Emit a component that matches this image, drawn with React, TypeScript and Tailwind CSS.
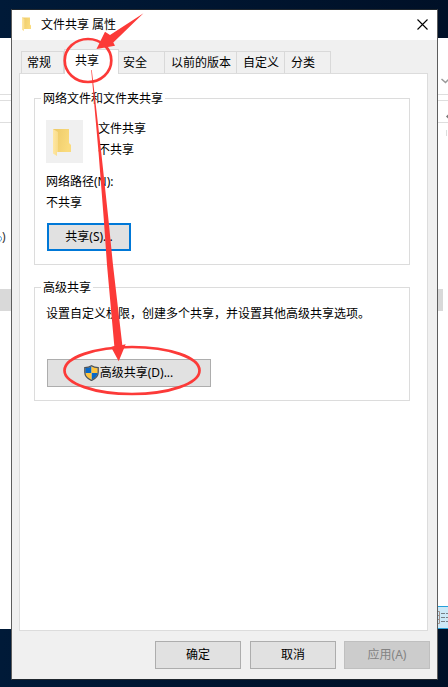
import React from "react";

function Folder({ className }: { className: string }) {
  return (
    <svg className={className} viewBox="0 0 20 28" aria-hidden="true">
      <defs>
        <linearGradient id="back" x1="0" x2="1" y1="0" y2="0.3">
          <stop offset="0" stopColor="#ecc967" />
          <stop offset="1" stopColor="#fadb7d" />
        </linearGradient>
        <linearGradient id="front" x1="0" x2="1">
          <stop offset="0" stopColor="#ffe7a3" />
          <stop offset="1" stopColor="#f8dc8b" />
        </linearGradient>
      </defs>
      <path d="M1 1h16v14l2 2v7H1z" fill="url(#back)" />
      <path d="M1 1l5 3v20l-1 0v4l-4-2.5z" fill="url(#front)" />
    </svg>
  );
}

function Shield() {
  return (
    <svg className="-mt-px h-4 w-[15px] shrink-0" viewBox="0 0 15 16" aria-hidden="true">
      <defs>
        <clipPath id="shield">
          <path d="M7.5 1.3C5.8 2.4 4 3 1.3 3v4.3c0 3.5 2.6 6 6.2 7.7 3.6-1.7 6.2-4.2 6.2-7.7V3C11 3 9.2 2.4 7.5 1.3z" />
        </clipPath>
      </defs>
      <g clipPath="url(#shield)">
        <path d="M0 0h7.500v8H0zM7.500 8H15v8H7.500z" fill="#0868c8" />
        <path d="M7.500 0H15v8H7.500zM0 8h7.500v8H0z" fill="#ffc43d" />
      </g>
      <path d="M7.5 .8C5.8 2 4 2.7 .8 2.700v4.600c0 3.800 2.900 6.500 6.700 8.200 3.800-1.700 6.700-4.400 6.700-8.200V2.700C11 2.700 9.200 2 7.500 .8z" fill="none" stroke="#4d5358" strokeWidth="1.3" />
    </svg>
  );
}

function Tab({ label, className }: { label: string; className: string }) {
  return (
    <div className={`h-[22px] border-t border-r border-[#d9d9d9] pt-[2px] ${className}`}>{label}</div>
  );
}

function Group({ title, className, children }: { title: string; className: string; children: React.ReactNode }) {
  return (
    <section className={`w-[376px] border border-[#dcdcdc] ${className}`}>
      <h2 className="-mt-[9px] ml-[6px] w-fit bg-white px-[2px]">{title}</h2>
      {children}
    </section>
  );
}

function Desktop() {
  return (
    <div className="absolute inset-0 bg-gradient-to-r from-[#001a38] to-[#001027]">
      <div className="mt-[38px] h-[591px] bg-white pt-[56px]">
        <div className="h-[7px] border-y border-[#dedede]" />
        <div className="h-[22px] border-b border-[#dedede]" />
        <div className="mt-[105px] flex h-[18px] items-center">
          <svg className="h-[9px] w-[2px]" viewBox="0 0 2 9" fill="none"><path d="M0 3.500q1.500 .3 1.500 2.200T0 8.300" stroke="#4a98d8" /></svg>
          <span className="text-[#333]">)</span>
        </div>
        <div className="mt-[43px] h-[22px] w-[443px] bg-[#d9d9d9]" />
      </div>
      <svg className="absolute top-[76px] left-[438px] h-[60px] w-[10px]" viewBox="0 0 10 60" fill="none">
        <path d="M3.500 3l4 3.500L11 3" stroke="#999" strokeWidth="1.500" />
        <path d="M8 40.500l2-2v4z" fill="#777" />
        <path d="M8.500 54v6" stroke="#ddd" />
      </svg>
      <div className="absolute top-[606px] left-[437px] h-[23px] w-[11px] border-y border-[#26a0da] bg-[#cce8f7]">
        <svg className="h-[21px] w-[11px]" viewBox="0 0 11 21" fill="none">
          <path d="M1 4.500h1.500v12H1M1 8.500h2M1 12.500h2" stroke="#a08f89" />
          <path d="M4 6.500h4M9 6.500h2M4 10.500h4M9 10.500h2M4 14.500h4M9 14.500h2" stroke="#777f86" />
        </svg>
      </div>
    </div>
  );
}

function Annotations() {
  return (
    <svg className="pointer-events-none absolute inset-0 z-20 h-[687px] w-[448px]" viewBox="0 0 448 687" fill="none">
      <ellipse cx="88" cy="60.500" rx="23.300" ry="21.500" stroke="#fc3a38" strokeWidth="2.700" />
      <path d="M143.500 13.300L113.300 42.500l1.700 3.200L96.500 49 105 31.700l5 3.300z" fill="#fc3a38" />
      <path d="M91.200 70h.6L101.200 152L108.300 218L113 265L122.300 345L125.700 344.300L118.700 361.300L111 347L114.300 346L107 265L103.700 218L98.500 152z" fill="#fc3a38" />
      <ellipse cx="132" cy="370.500" rx="67.500" ry="23.500" stroke="#fc3a38" strokeWidth="2.700" />
    </svg>
  );
}

export default function App() {
  return (
    <div className="relative h-[687px] w-[448px] overflow-hidden font-['Noto_Sans','Noto_Sans_CJK_SC',sans-serif] text-[12px] leading-[18px] whitespace-nowrap text-black">
      <Desktop />
      <main className="absolute top-[9px] left-[11px] h-[671px] w-[427px] border border-[#5d5d5d] border-t-[#20272e] border-b-[#20272e] bg-[#f0f0f0]">
        <header className="flex h-[30px] items-start bg-white">
          <Folder className="mt-[7px] ml-[9px] h-[14px] w-[11px]" />
          <h1 className="mt-[6px] ml-[9px]">文件共享 属性</h1>
          <svg className="mt-[9px] mr-[9px] ml-auto size-[11px]" viewBox="0 0 11 11"><path d="M.5 .5l10 10M10.500 .5l-10 10" stroke="#000" strokeWidth="1.100" /></svg>
        </header>

        <nav className="mt-[9px] ml-[9px] flex h-[24px] items-end">
          <Tab label="常规" className="w-[43px] border-l pl-[5px]" />
          <div className="relative z-10 -mb-px h-[25px] w-[55px] border border-b-0 border-[#d9d9d9] bg-white pt-[2px] pl-[10px]">共享</div>
          <Tab label="安全" className="w-[46px] pl-[4px]" />
          <Tab label="以前的版本" className="w-[72px] pl-[6px]" />
          <Tab label="自定义" className="w-[48px] pl-[6px]" />
          <Tab label="分类" className="w-[46px] pl-[6px]" />
        </nav>

        <div className="ml-[7px] h-[558px] w-[409px] border border-[#dcdcdc] bg-white pt-[24px] pl-[14px]">
          <Group title="网络文件和文件夹共享" className="h-[167px]">
            <div className="mt-[12px] ml-[11px] flex">
              <div className="flex h-[43px] w-[37px] items-center justify-center bg-[#f0f0f0]"><Folder className="-ml-[5px] h-[28px] w-[20px]" /></div>
              <div className="ml-[15px]">
                <p>文件共享</p>
                <p className="mt-[3px]">不共享</p>
              </div>
            </div>
            <p className="mt-[10px] ml-[11px]">网络路径(N):</p>
            <p className="mt-[3px] ml-[11px]">不共享</p>
            <button className="mt-[11px] ml-[12px] block h-[28px] w-[84px] border-2 border-[#0078d7] bg-[#e1e1e1] pb-px">共享(S)...</button>
          </Group>
          <Group title="高级共享" className="mt-[22px] h-[114px]">
            <p className="mt-[8px] ml-[11px]">设置自定义权限，创建多个共享，并设置其他高级共享选项。</p>
            <button className="mt-[36px] ml-[12px] flex h-[28px] w-[164px] items-center justify-center gap-px border border-[#adadad] bg-[#e1e1e1] pr-px">
              <Shield />
              <span>高级共享(D)...</span>
            </button>
          </Group>
        </div>

        <footer className="mt-[10px] mr-[7px] flex justify-end gap-[8px]">
          <button className="mr-px h-[28px] w-[86px] border border-[#adadad] bg-[#e1e1e1]">确定</button>
          <button className="h-[28px] w-[86px] border border-[#adadad] bg-[#e1e1e1]">取消</button>
          <button className="h-[28px] w-[86px] border border-[#bfbfbf] bg-[#cccccc] text-[#838383]" disabled>应用(A)</button>
        </footer>
      </main>
      <Annotations />
    </div>
  );
}
